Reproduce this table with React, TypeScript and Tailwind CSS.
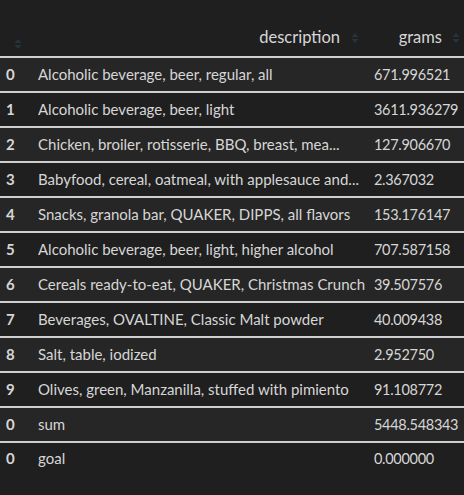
import React from "react";

const rows: [string, string, string][] = [
  ["0", "Alcoholic beverage, beer, regular, all", "671.996521"],
  ["1", "Alcoholic beverage, beer, light", "3611.936279"],
  ["2", "Chicken, broiler, rotisserie, BBQ, breast, mea...", "127.906670"],
  ["3", "Babyfood, cereal, oatmeal, with applesauce and...", "2.367032"],
  ["4", "Snacks, granola bar, QUAKER, DIPPS, all flavors", "153.176147"],
  ["5", "Alcoholic beverage, beer, light, higher alcohol", "707.587158"],
  ["6", "Cereals ready-to-eat, QUAKER, Christmas Crunch", "39.507576"],
  ["7", "Beverages, OVALTINE, Classic Malt powder", "40.009438"],
  ["8", "Salt, table, iodized", "2.952750"],
  ["9", "Olives, green, Manzanilla, stuffed with pimiento", "91.108772"],
  ["0", "sum", "5448.548343"],
  ["0", "goal", "0.000000"],
];

function SortIcon() {
  return (
    <svg width="8" height="12" viewBox="0 0 8 12" className="shrink-0">
      <path d="M4 1 L7.5 5 L0.5 5 Z" fill="#26353a" />
      <path d="M4 11 L7.5 7 L0.5 7 Z" fill="#26353a" />
    </svg>
  );
}

export default function App() {
  return (
    <div
      className="w-[464px] h-[495px] bg-[#1f1f1f] text-[#d6d6d6] overflow-hidden"
      style={{ fontFamily: "Lato, 'Noto Sans', sans-serif" }}
    >
      <div className="h-[56px] flex items-end pb-[6px] bg-[#1f1f1f] text-[16.5px]">
        <div className="w-[30px] flex justify-center pl-[6px]">
          <SortIcon />
        </div>
        <div className="flex-1 flex items-center justify-end gap-[11px] pr-[6px]">
          <span>description</span>
          <SortIcon />
        </div>
        <div className="w-[99px] flex items-center justify-end gap-[10px] pr-[4px]">
          <span>grams</span>
          <SortIcon />
        </div>
      </div>
      {rows.map((r, i) => (
        <div
          key={i}
          className={`h-[35px] flex items-center text-[15px] ${
            i < rows.length - 1 ? "border-t-2 border-b-0" : "border-y-2 border-b-transparent"
          } border-[#cfcfcf] ${i % 2 === 0 ? "bg-[#262626]" : "bg-[#1f1f1f]"}`}
        >
          <div className="w-[38px] pl-[6px] font-bold">{r[0]}</div>
          <div className="flex-1 min-w-0 whitespace-nowrap overflow-hidden">{r[1]}</div>
          <div className="w-[90px] shrink-0 whitespace-nowrap text-[14.5px] tracking-[-0.3px]">{r[2]}</div>
        </div>
      ))}
    </div>
  );
}
